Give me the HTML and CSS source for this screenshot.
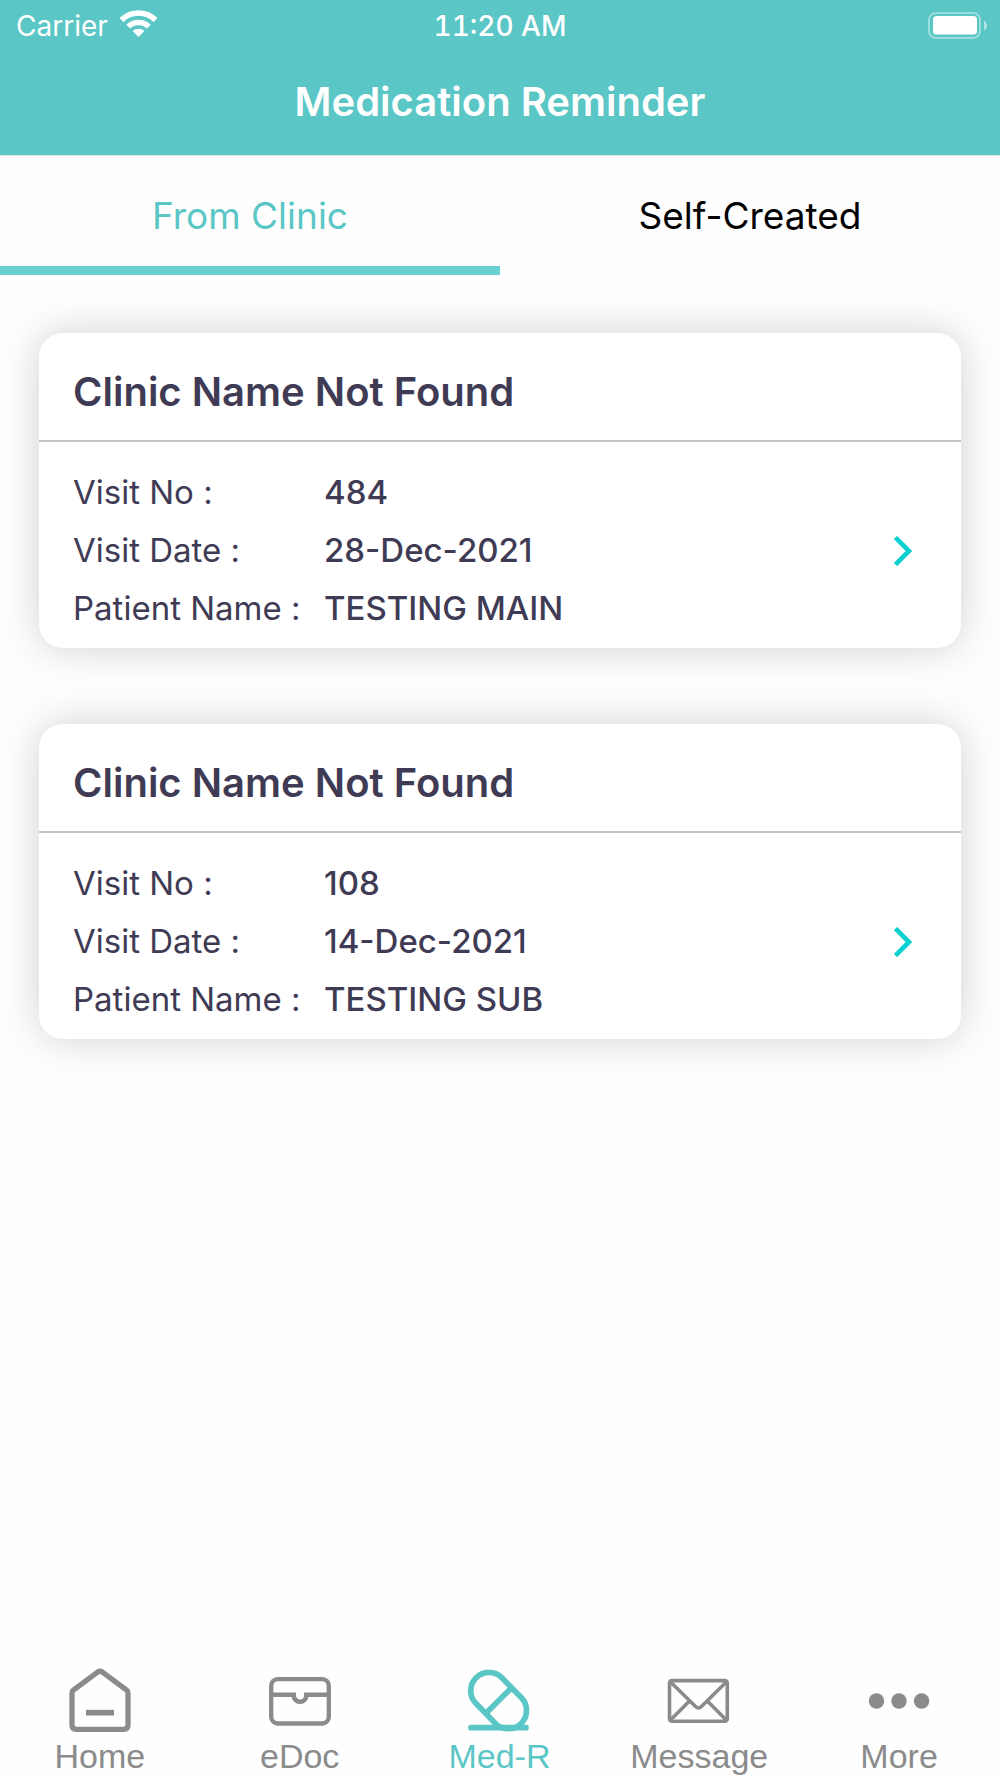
FILE: index.html
```html
<!DOCTYPE html>
<html lang="en">
<head>
<meta charset="utf-8">
<meta name="viewport" content="width=device-width, initial-scale=1">
<title>Medication Reminder</title>
<link rel="stylesheet" href="styles.css">
</head>
<body>
<div class="app">
  <header class="header">
    <div class="status">
      <div class="status-left">
        <span>Carrier</span>
        <svg class="wifi" viewBox="0 0 37 27" aria-hidden="true">
          <path d="M1.5 10A24.1 24.1 0 0 1 35.5 10" fill="none" stroke="currentColor" stroke-width="5.7"/>
          <path d="M8.2 16.7A14.6 14.6 0 0 1 28.8 16.7" fill="none" stroke="currentColor" stroke-width="5.4"/>
          <path d="M12.6 21.1A8.3 8.3 0 0 1 24.4 21.1L18.5 27Z" fill="currentColor"/>
        </svg>
      </div>
      <span class="status-time">11:20 AM</span>
      <div class="status-right">
        <svg class="battery" viewBox="0 0 60 28" aria-hidden="true">
          <rect x="1" y="1" width="51" height="25" rx="7" fill="none" stroke="currentColor" stroke-width="2" opacity="0.4"/>
          <rect x="5" y="4" width="44" height="18.500" rx="3.500" fill="currentColor"/>
          <path d="M56 8.500C60 10.500 60 16.500 56 18.500Z" fill="currentColor" opacity="0.5"/>
        </svg>
      </div>
    </div>
    <h1 class="title">Medication Reminder</h1>
  </header>

  <div class="tabs" role="tablist">
    <button class="tab tab-active" type="button" role="tab" aria-selected="true">From Clinic</button>
    <button class="tab" type="button" role="tab" aria-selected="false">Self-Created</button>
  </div>

  <main class="visits">
    <a class="card" href="#visit-484">
      <h2 class="card-title">Clinic Name Not Found</h2>
      <div class="card-body">
        <dl class="details">
          <dt>Visit No :</dt><dd>484</dd>
          <dt>Visit Date :</dt><dd>28-Dec-2021</dd>
          <dt>Patient Name :</dt><dd>TESTING MAIN</dd>
        </dl>
        <svg class="chevron" viewBox="0 0 18 30" aria-hidden="true"><path d="M1.500 1.500L15 15L1.500 28.500" fill="none" stroke="currentColor" stroke-width="4.600"/></svg>
      </div>
    </a>
    <a class="card" href="#visit-108">
      <h2 class="card-title">Clinic Name Not Found</h2>
      <div class="card-body">
        <dl class="details">
          <dt>Visit No :</dt><dd>108</dd>
          <dt>Visit Date :</dt><dd>14-Dec-2021</dd>
          <dt>Patient Name :</dt><dd>TESTING SUB</dd>
        </dl>
        <svg class="chevron" viewBox="0 0 18 30" aria-hidden="true"><path d="M1.500 1.500L15 15L1.500 28.500" fill="none" stroke="currentColor" stroke-width="4.600"/></svg>
      </div>
    </a>
  </main>

  <nav class="nav">
    <a class="nav-item" href="#home">
      <svg class="nav-icon" viewBox="0 0 64 64" fill="none" stroke="currentColor" aria-hidden="true">
        <path d="M29.600 4.200Q32 2.400 34.400 4.200L58.600 22.200Q60 23.300 60 25V57Q60 61.300 55.700 61.300H8.300Q4 61.300 4 57V25Q4 23.300 5.400 22.200Z" stroke-width="5.300"/>
        <path d="M18 44.700H46" stroke-width="5.700"/>
      </svg>
      <span>Home</span>
    </a>
    <a class="nav-item" href="#edoc">
      <svg class="nav-icon" viewBox="0 0 64 64" fill="none" stroke="currentColor" aria-hidden="true">
        <rect x="3.200" y="11.200" width="57.600" height="44.300" rx="6.500" stroke-width="4.300"/>
        <path d="M3 26.700H25.700V27.500A6.300 6.300 0 0 0 38.300 27.500V26.700H61" stroke-width="4.600"/>
      </svg>
      <span>eDoc</span>
    </a>
    <a class="nav-item nav-active" href="#med-r" aria-current="page">
      <svg class="nav-icon" viewBox="0 0 64 64" fill="none" stroke="currentColor" stroke-width="5.700" aria-hidden="true">
        <path d="M34.900 9.800A18.200 18.200 0 1 0 9.100 35.600L28.400 55.400A18.200 18.200 0 0 0 54.200 29.600Z"/>
        <path d="M44.600 19.700L18.800 45.500"/>
        <path d="M4 59.700H59" stroke-linecap="round"/>
      </svg>
      <span>Med-R</span>
    </a>
    <a class="nav-item" href="#message">
      <svg class="nav-icon" viewBox="0 0 64 64" fill="none" stroke="currentColor" stroke-width="3.600" aria-hidden="true">
        <rect x="2.500" y="12.600" width="57.800" height="40.600" rx="2.500"/>
        <path d="M3 13.500L28.300 38.300Q31.500 41.500 34.700 38.300L59.800 13.500M3 52.500L22 33.500M59.800 52.500L40.800 33.500"/>
      </svg>
      <span>Message</span>
    </a>
    <a class="nav-item" href="#more">
      <svg class="nav-icon" viewBox="0 0 64 64" fill="currentColor" aria-hidden="true">
        <circle cx="9.500" cy="33" r="7.700"/><circle cx="32" cy="33" r="7.700"/><circle cx="54.600" cy="33" r="7.700"/>
      </svg>
      <span>More</span>
    </a>
  </nav>
</div>
</body>
</html>
```
FILE: styles.css
```css
* {
  box-sizing: border-box;
}

body {
  margin: 0;
  background: #fefefe;
  color: #3f3b55;
  font-family: Inter, "Liberation Sans", sans-serif;
}

.app {
  display: flex;
  flex-direction: column;
  min-height: 100vh;
}

a {
  color: inherit;
  text-decoration: none;
}

svg {
  display: block;
}

/* Header */
.header {
  padding-bottom: 2px;
  background: #5ac6c6;
  border-bottom: 1px solid #dfe3e4;
  color: #fff;
}

.status {
  display: grid;
  grid-template-columns: 1fr auto 1fr;
  align-items: center;
  height: 51px;
  padding: 0 12px;
  font-size: 28px;
}

.status-left {
  display: flex;
  align-items: center;
  gap: 12px;
  padding-left: 4px;
}

.status-time {
  font-variant-numeric: tabular-nums;
  font-weight: 500;
}

.status-right {
  display: flex;
  justify-content: flex-end;
}

.wifi {
  width: 37px;
  height: 27px;
  margin-bottom: 4px;
}

.battery {
  width: 60px;
  height: 28px;
}

.title {
  margin: 0;
  font-size: 40px;
  font-weight: 600;
  line-height: 102px;
  text-align: center;
}

/* Tabs */
.tabs {
  display: grid;
  grid-template-columns: 1fr 1fr;
}

.tab {
  padding: 10px 0 0;
  border: 0;
  border-bottom: 9px solid transparent;
  background: none;
  color: #000;
  font: inherit;
  font-size: 37px;
  line-height: 100px;
}

.tab-active {
  border-bottom-color: #6ad1d2;
  color: #5ac6c6;
}

/* Visit cards */
.visits {
  display: flex;
  flex: 1;
  flex-direction: column;
  gap: 76px;
  padding: 58px 39px;
}

.card {
  border-radius: 24px;
  background: #fff;
  box-shadow: 0 0 40px rgba(0, 0, 0, 0.18);
}

.card-title {
  margin: 0;
  padding: 11px 34px 0;
  border-bottom: 2px solid #c4c4c4;
  font-size: 40px;
  font-weight: 600;
  line-height: 96px;
}

.card-body {
  display: flex;
  align-items: center;
  justify-content: space-between;
  padding: 21px 49px 11px 34px;
}

.details {
  display: grid;
  grid-template-columns: 251px auto;
  margin: 0;
  font-size: 33px;
  line-height: 58px;
}

.details dd {
  margin: 0;
  font-weight: 500;
}

.chevron {
  width: 18px;
  height: 30px;
  margin-top: 2px;
  color: #0bd0d0;
}

/* Bottom navigation */
.nav {
  display: grid;
  grid-template-columns: repeat(5, 1fr);
  padding: 0 1px 2px 0;
  color: #8b8b8b;
  font-family: "Liberation Sans", Arial, sans-serif;
  font-size: 34px;
  line-height: 40px;
}

.nav-item {
  display: flex;
  flex-direction: column;
  align-items: center;
  gap: 4px;
}

.nav-active {
  color: #5ac6c6;
}

.nav-icon {
  width: 64px;
  height: 64px;
}
```
